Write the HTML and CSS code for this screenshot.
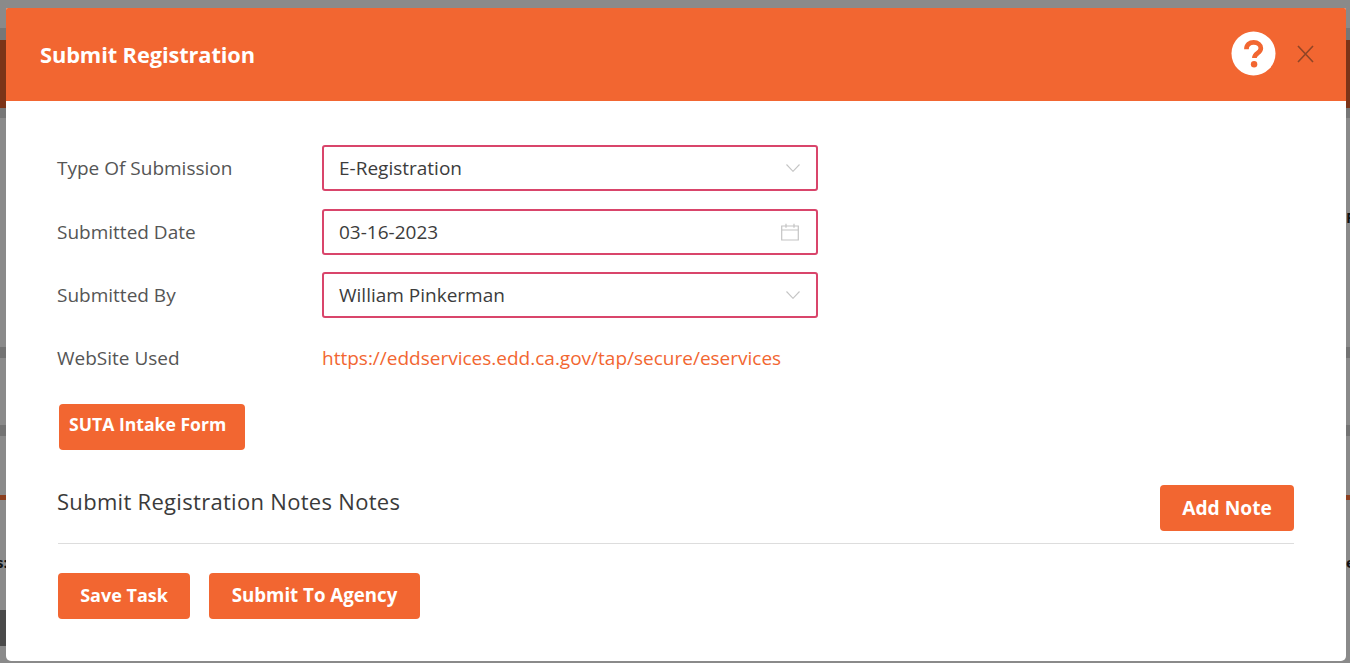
FILE: index.html
```html
<!DOCTYPE html>
<html lang="en">
<head>
<meta charset="utf-8">
<title>Submit Registration</title>
<link rel="stylesheet" href="styles.css">
</head>
<body>
<div class="backdrop">
  <div class="band band-top"></div>
  <div class="band band-head"></div>
  <div class="band band-under"></div>
  <div class="band band-a"></div>
  <div class="band band-b"></div>
  <div class="band band-line"></div>
  <span class="peek peek-f">F</span>
  <span class="peek peek-s">s:</span>
  <span class="peek peek-e">e</span>
  <div class="peek-box"></div>
  <main class="modal">
    <header class="modal-head">
      <h1 class="modal-title">Submit Registration</h1>
      <div class="head-actions">
        <svg class="help" viewBox="0 0 46 46" aria-hidden="true">
          <circle cx="23" cy="23" r="22.5" fill="#fff"/>
          <path d="M15.8 18.6c0-4.6 3.2-7 7.4-7 4 0 7.3 2.5 7.3 6 0 5-6.6 5-6.6 10" fill="none" stroke="#f26631" stroke-width="4.8"/>
          <circle cx="23.6" cy="34" r="3.3" fill="#f26631"/>
        </svg>
        <svg class="close" viewBox="0 0 17 18" aria-hidden="true">
          <path d="M1 1l15 16M16 1L1 17" fill="none" stroke="#8f4526" stroke-width="1.6"/>
        </svg>
      </div>
    </header>
    <div class="modal-body">
      <div class="field-row">
        <span class="field-label">Type Of Submission</span>
        <div class="input">
          <span>E-Registration</span>
          <svg class="chev" viewBox="0 0 14 8" aria-hidden="true"><path d="M.5.5L7 7.3 13.5.5" fill="none" stroke="#c4c4c4" stroke-width="1.1"/></svg>
        </div>
      </div>
      <div class="field-row">
        <span class="field-label">Submitted Date</span>
        <div class="input">
          <span>03-16-2023</span>
          <svg class="cal" viewBox="0 0 18 18" aria-hidden="true"><path d="M.7 3h16.6v14H.7zM.7 7h16.6M5 .8v4M13 .8v4" fill="none" stroke="#c4c4c4" stroke-width="1.2"/></svg>
        </div>
      </div>
      <div class="field-row">
        <span class="field-label">Submitted By</span>
        <div class="input">
          <span>William Pinkerman</span>
          <svg class="chev" viewBox="0 0 14 8" aria-hidden="true"><path d="M.5.5L7 7.3 13.5.5" fill="none" stroke="#c4c4c4" stroke-width="1.1"/></svg>
        </div>
      </div>
      <div class="field-row link-row">
        <span class="field-label">WebSite Used</span>
        <a class="site-link" href="#">https://eddservices.edd.ca.gov/tap/secure/eservices</a>
      </div>
      <button class="btn btn-intake" type="button">SUTA Intake Form</button>
      <div class="notes-head">
        <h2 class="notes-title">Submit Registration Notes Notes</h2>
        <button class="btn btn-add" type="button">Add Note</button>
      </div>
      <div class="actions">
        <button class="btn btn-save" type="button">Save Task</button>
        <button class="btn btn-submit" type="button">Submit To Agency</button>
      </div>
    </div>
  </main>
</div>
</body>
</html>
```

FILE: styles.css
```css
* { box-sizing: border-box; }
html, body { margin: 0; height: 100%; overflow: hidden; }
body { font-family: "Open Sans", "Noto Sans", sans-serif; color: #333; }
.backdrop { position: relative; width: 1350px; height: 663px; background: #8a8a8a; padding: 8px 4px 2px 6px; overflow: hidden; }
.band { position: absolute; left: 0; right: 0; }
.band-top { top: 28px; height: 12px; background: #777; }
.band-head { top: 40px; height: 68px; background: #7c3418; }
.band-under { top: 108px; height: 10px; background: #777; }
.band-a { top: 347px; height: 11px; background: #737373; }
.band-b { top: 425px; height: 11px; background: #737373; }
.band-line { top: 495px; height: 5px; background: #8c3f1f; }
.peek { position: absolute; font-weight: 700; font-size: 15px; line-height: 18px; color: #111; }
.peek-f { left: 1346px; top: 208px; }
.peek-s { left: -4px; top: 553px; }
.peek-e { left: 1346px; top: 553px; }
.peek-box { position: absolute; left: 0; top: 610px; width: 6px; height: 36px; background: #4a4a4a; }
.modal { position: relative; height: 653px; background: #fff; border-radius: 2px 2px 5px 5px; overflow: hidden; }
.modal-head { height: 93px; background: #f26631; display: flex; align-items: center; justify-content: space-between; padding: 0 32px 0 34px; }
.modal-title { margin: 0; font-size: 21.8px; font-weight: 700; color: #fff; letter-spacing: -.1px; }
.head-actions { display: flex; align-items: center; gap: 21px; }
.help { width: 45px; height: 45px; margin-top: -2px; }
.close { width: 17px; height: 18px; margin-top: -1px; }
.modal-body { padding: 44px 52px 0; }
.field-row { display: flex; align-items: center; height: 46px; margin-bottom: 17.5px; }
.field-label { width: 265px; font-size: 19px; color: #555; margin-left: -1px; flex: none; }
.input { width: 496px; height: 46px; border: 2px solid #d9456b; border-radius: 3px; display: flex; align-items: center; justify-content: space-between; padding: 0 16px 0 15px; font-size: 19px; color: #3c3c3c; }
.chev { width: 14px; height: 8px; }
.cal { width: 18px; height: 18px; margin-right: 1px; }
.link-row { height: 26px; margin-top: 26.5px; margin-bottom: 0; }
.site-link { color: #f26631; font-size: 19px; text-decoration: none; }
.btn { height: 46px; padding: 0; border: 0; border-radius: 4px; background: #f26631; color: #fff; font-family: inherit; font-weight: 700; font-size: 18px; white-space: nowrap; }
.btn-intake { display: block; margin: 33px 0 0 1px; padding: 0 10px 5px; font-size: 17.6px; width: 186px; text-align: left; }
.notes-head { display: flex; justify-content: space-between; align-items: flex-start; margin-top: 35px; border-bottom: 1px solid #ddd; height: 59px; }
.notes-title { margin: 1px 0 0 -1px; font-size: 22px; font-weight: 500; color: #3a3a3a; letter-spacing: .3px; }
.btn-add { width: 134px; font-size: 19.2px; }
.btn-save { width: 132px; padding-bottom: 2px; }
.btn-submit { width: 211px; font-size: 18.7px; padding-bottom: 2px; }
.actions { display: flex; gap: 19px; margin-top: 29px; }
```
